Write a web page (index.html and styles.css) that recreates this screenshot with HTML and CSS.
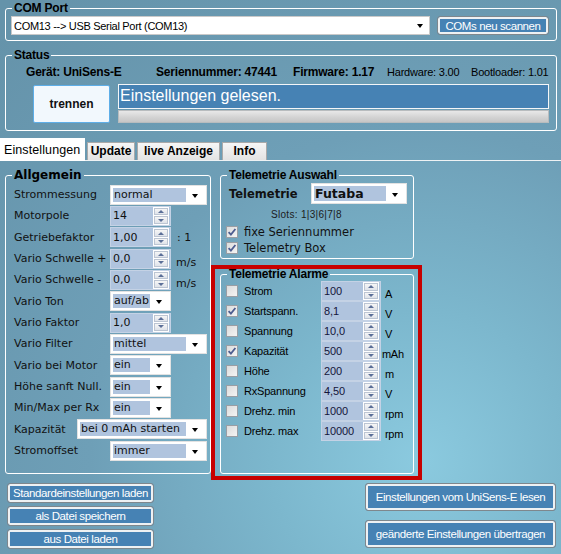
FILE: index.html
```html
<!DOCTYPE html>
<html lang="de">
<head>
<meta charset="utf-8">
<title>UniSens-E</title>
<link rel="stylesheet" href="styles.css">
</head>
<body>
<div class="app">
  <fieldset class="group com">
    <legend>COM Port</legend>
    <div class="com-body">
      <div class="combo plain com-select"><span class="val">COM13 --&gt; USB Serial Port (COM13)</span><span class="arr"></span></div>
      <div class="btn scan">COMs neu scannen</div>
    </div>
  </fieldset>

  <fieldset class="group status">
    <legend>Status</legend>
    <div class="status-body">
      <div class="info-row">
        <span class="i1 b">Gerät: UniSens-E</span>
        <span class="i2 b">Seriennummer: 47441</span>
        <span class="i3 b">Firmware: 1.17</span>
        <span class="i4">Hardware: 3.00</span>
        <span class="i5">Bootloader: 1.01</span>
      </div>
      <div class="status-row">
        <div class="disconnect">trennen</div>
        <div class="status-col">
          <div class="status-msg">Einstellungen gelesen.</div>
          <div class="progress"></div>
        </div>
      </div>
    </div>
  </fieldset>

  <div class="tabs">
    <div class="tab active">Einstellungen</div>
    <div class="tab t-update">Update</div>
    <div class="tab t-live">live Anzeige</div>
    <div class="tab t-info">Info</div>
  </div>

  <div class="panel">
    <div class="panel-top">
      <fieldset class="group allgemein">
        <legend>Allgemein</legend>
        <div class="al-body">
          <div class="arow"><span class="lbl">Strommessung</span><div class="combo w97"><span class="val">normal</span><span class="arr"></span></div></div>
          <div class="arow"><span class="lbl">Motorpole</span><div class="num"><span class="nv">14</span><span class="spin"><i class="up"></i><i class="dn"></i></span></div></div>
          <div class="arow"><span class="lbl">Getriebefaktor</span><div class="num"><span class="nv">1,00</span><span class="spin"><i class="up"></i><i class="dn"></i></span></div><span class="unit colon">: 1</span></div>
          <div class="arow"><span class="lbl">Vario Schwelle +</span><div class="num"><span class="nv">0,0</span><span class="spin"><i class="up"></i><i class="dn"></i></span></div><span class="unit low">m/s</span></div>
          <div class="arow"><span class="lbl">Vario Schwelle -</span><div class="num"><span class="nv">0,0</span><span class="spin"><i class="up"></i><i class="dn"></i></span></div><span class="unit low">m/s</span></div>
          <div class="arow"><span class="lbl">Vario Ton</span><div class="combo w61"><span class="val">auf/ab</span><span class="arr"></span></div></div>
          <div class="arow"><span class="lbl">Vario Faktor</span><div class="num"><span class="nv">1,0</span><span class="spin"><i class="up"></i><i class="dn"></i></span></div></div>
          <div class="arow"><span class="lbl">Vario Filter</span><div class="combo w97"><span class="val">mittel</span><span class="arr"></span></div></div>
          <div class="arow"><span class="lbl">Vario bei Motor</span><div class="combo w61"><span class="val">ein</span><span class="arr"></span></div></div>
          <div class="arow"><span class="lbl">Höhe sanft Null.</span><div class="combo w61"><span class="val">ein</span><span class="arr"></span></div></div>
          <div class="arow"><span class="lbl">Min/Max per Rx</span><div class="combo w61"><span class="val">ein</span><span class="arr"></span></div></div>
          <div class="arow"><span class="lbl short">Kapazität</span><div class="combo w130"><span class="val">bei 0 mAh starten</span><span class="arr"></span></div></div>
          <div class="arow"><span class="lbl">Stromoffset</span><div class="combo w97"><span class="val">immer</span><span class="arr"></span></div></div>
        </div>
      </fieldset>

      <div class="right-col">
        <fieldset class="group tele">
          <legend>Telemetrie Auswahl</legend>
          <div class="tele-body">
            <div class="tele-row"><span class="tlbl">Telemetrie</span><div class="combo w96 bold"><span class="val">Futaba</span><span class="arr"></span></div></div>
            <div class="slots">Slots: 1|3|6|7|8</div>
            <div class="cbrow"><span class="cb"><svg viewBox="0 0 12 12" width="12" height="12"><path d="M2.6 6.2 L4.9 8.6 L9.4 3" fill="none" stroke="#4d5d90" stroke-width="1.8"/></svg></span><span>fixe Seriennummer</span></div>
            <div class="cbrow"><span class="cb"><svg viewBox="0 0 12 12" width="12" height="12"><path d="M2.6 6.2 L4.9 8.6 L9.4 3" fill="none" stroke="#4d5d90" stroke-width="1.8"/></svg></span><span>Telemetry Box</span></div>
          </div>
        </fieldset>

        <div class="alarm-wrap">
          <fieldset class="group alarm">
            <legend>Telemetrie Alarme</legend>
            <div class="alarm-body">
              <div class="alrow"><span class="cb"></span><span class="allbl">Strom</span><div class="num sm"><span class="nv">100</span><span class="spin"><i class="up"></i><i class="dn"></i></span></div><span class="aunit">A</span></div>
              <div class="alrow"><span class="cb"><svg viewBox="0 0 12 12" width="12" height="12"><path d="M2.6 6.2 L4.9 8.6 L9.4 3" fill="none" stroke="#4d5d90" stroke-width="1.8"/></svg></span><span class="allbl">Startspann.</span><div class="num sm"><span class="nv">8,1</span><span class="spin"><i class="up"></i><i class="dn"></i></span></div><span class="aunit">V</span></div>
              <div class="alrow"><span class="cb"></span><span class="allbl">Spannung</span><div class="num sm"><span class="nv">10,0</span><span class="spin"><i class="up"></i><i class="dn"></i></span></div><span class="aunit">V</span></div>
              <div class="alrow"><span class="cb"><svg viewBox="0 0 12 12" width="12" height="12"><path d="M2.6 6.2 L4.9 8.6 L9.4 3" fill="none" stroke="#4d5d90" stroke-width="1.8"/></svg></span><span class="allbl">Kapazität</span><div class="num sm"><span class="nv">500</span><span class="spin"><i class="up"></i><i class="dn"></i></span></div><span class="aunit mah">mAh</span></div>
              <div class="alrow"><span class="cb"></span><span class="allbl">Höhe</span><div class="num sm"><span class="nv">200</span><span class="spin"><i class="up"></i><i class="dn"></i></span></div><span class="aunit">m</span></div>
              <div class="alrow"><span class="cb"></span><span class="allbl">RxSpannung</span><div class="num sm"><span class="nv">4,50</span><span class="spin"><i class="up"></i><i class="dn"></i></span></div><span class="aunit">V</span></div>
              <div class="alrow"><span class="cb"></span><span class="allbl">Drehz. min</span><div class="num sm"><span class="nv">1000</span><span class="spin"><i class="up"></i><i class="dn"></i></span></div><span class="aunit">rpm</span></div>
              <div class="alrow"><span class="cb"></span><span class="allbl">Drehz. max</span><div class="num sm"><span class="nv">10000</span><span class="spin"><i class="up"></i><i class="dn"></i></span></div><span class="aunit">rpm</span></div>
            </div>
          </fieldset>
        </div>
      </div>
    </div>

    <div class="bottom-row">
      <div class="left-btns">
        <div class="btn sbtn">Standardeinstellungen laden</div>
        <div class="btn sbtn">als Datei speichern</div>
        <div class="btn sbtn">aus Datei laden</div>
      </div>
      <div class="right-btns">
        <div class="btn lbtn">Einstellungen vom UniSens-E lesen</div>
        <div class="btn lbtn">geänderte Einstellungen übertragen</div>
      </div>
    </div>
  </div>
</div>
</body>
</html>
```

FILE: styles.css
```css
* { box-sizing: border-box; }
html, body { margin: 0; padding: 0; }
body {
  width: 561px;
  height: 554px;
  overflow: hidden;
  font-family: "Liberation Sans", Arial, sans-serif;
  font-size: 11px;
  color: #000;
  background: radial-gradient(circle at 420px 460px, #8bcadf 0px, #7cb7cd 150px, #6e9fb7 330px, #6593aa 600px);
}
.app { width: 561px; height: 554px; }

/* group boxes */
.group {
  border: 1px solid #fff;
  border-radius: 3px;
  margin: 0;
  padding: 0;
  min-width: 0;
}
.group > legend {
  margin-left: 6px;
  padding: 0 2px;
  font: bold 12px/14px "Liberation Sans", Arial, sans-serif;
  letter-spacing: -0.2px;
  color: #000;
}

/* COM port */
.com { width: 552px; margin: 1px 0 0 5px; }
.com-body { display: flex; align-items: center; gap: 7px; padding: 1px 7px 5px 5px; }

.combo {
  display: flex;
  align-items: center;
  height: 20px;
  background: #fff;
  border: 1px solid #e2e2e2;
  padding: 2px;
  font-family: "DejaVu Sans", Verdana, sans-serif;
  font-size: 11px;
}
.combo .val {
  flex: 1;
  height: 14px;
  line-height: 14px;
  background: #b0c4de;
  padding-left: 1px;
  white-space: nowrap;
  overflow: hidden;
}
.combo .arr {
  flex: none;
  width: 18px;
  height: 14px;
  position: relative;
}
.combo .arr::after {
  content: "";
  position: absolute;
  left: 6px;
  top: 6px;
  border-left: 3.5px solid transparent;
  border-right: 3.5px solid transparent;
  border-top: 4px solid #000;
}
.combo.plain { border-color: #c9c9c9; height: 19px; }
.combo.plain .val {
  background: transparent;
  font-family: "Liberation Sans", Arial, sans-serif;
  letter-spacing: -0.3px;
  padding-left: 0;
}
.com-select { flex: 0 0 419px; }
.com-select .arr { width: 14px; }
.com-select .arr::after { left: 4px; top: 5px; border-left-width: 3px; border-right-width: 3px; border-top-width: 4px; }

.btn {
  display: flex;
  align-items: center;
  justify-content: center;
  background: #4682b4;
  color: #fff;
  border: 1px solid #7e878d;
  border-radius: 3px;
  box-shadow: inset 0 0 0 2px #eef1f3;
  font-family: "Liberation Sans", Arial, sans-serif;
  font-size: 11.5px;
  letter-spacing: -0.4px;
  white-space: nowrap;
}
.scan { flex: 0 0 112px; height: 19px; }

/* status */
.status { width: 552px; margin: 7px 0 0 5px; }
.status-body { padding: 3px 6px 7px 0; }
.info-row {
  display: flex;
  height: 14px;
  line-height: 14px;
  padding-left: 20px;
  letter-spacing: -0.2px;
  white-space: nowrap;
}
.info-row .b { font-weight: bold; font-size: 12px; }
.i1 { width: 130px; }
.i2 { width: 137px; }
.i3 { width: 94px; }
.i4 { width: 84px; }
.status-row { display: flex; margin-top: 5px; padding-left: 27px; }
.disconnect {
  width: 77px;
  height: 38px;
  margin-top: 1px;
  background: #f2f8fd;
  border: 1px solid #5eaee8;
  border-radius: 2px;
  display: flex;
  align-items: center;
  justify-content: center;
  font-weight: bold;
  font-size: 12px;
  color: #111;
}
.status-col { width: 431px; margin-left: 8px; }
.status-msg {
  height: 25px;
  background: #4682b4;
  border: 1px solid #f4f6f8;
  color: #fff;
  font-size: 16px;
  line-height: 22px;
  padding-left: 1px;
}
.progress {
  height: 13px;
  margin-top: 1px;
  border: 1px solid #b8bcbe;
  background: linear-gradient(#e8e8e8, #d2d2d2 60%, #c6c6c6);
}

/* tabs */
.tabs {
  display: flex;
  align-items: flex-end;
  height: 22px;
  margin-top: 7px;
}
.tab {
  height: 18px;
  background: linear-gradient(#f6f6f6, #e3e3e3);
  border: 1px solid #a9a9a9;
  border-bottom: none;
  font-weight: bold;
  font-size: 12px;
  line-height: 17px;
  text-align: center;
  margin-right: 2px;
}
.tab.active {
  position: relative;
  z-index: 1;
  width: 85px;
  height: 23px;
  margin-bottom: -1px;
  margin-right: 2px;
  background: #fff;
  border: none;
  font-weight: normal;
  font-size: 12.5px;
  line-height: 24px;
  text-align: left;
  padding-left: 4px;
  letter-spacing: 0.1px;
}
.t-update { width: 48px; }
.t-live { width: 83px; }
.t-info { width: 45px; }

/* panel */
.panel { border-top: 1px solid #eef2f4; }
.panel-top { display: flex; align-items: flex-start; padding-left: 5px; margin-top: 7px; }

.allgemein { width: 206px; }
.allgemein > legend { font-family: "DejaVu Sans", Verdana, sans-serif; letter-spacing: 0; }
.al-body {
  padding: 2px 0 12px 8px;
  font-family: "DejaVu Sans", Verdana, sans-serif;
  font-size: 11px;
  color: #111;
}
.arow { display: flex; align-items: center; height: 21.33px; }
.lbl { flex: none; width: 96px; white-space: nowrap; }
.lbl.short { width: 63px; }
.w97 { width: 97px; }
.w96 { width: 96px; }
.w61 { width: 61px; }
.w130 { width: 130px; }

.num {
  display: flex;
  align-items: center;
  width: 61px;
  height: 20px;
  background: #b0c4de;
  border: 1px solid #c4d2e5;
  padding-left: 2px;
}
.num .nv { flex: 1; white-space: nowrap; }
.spin {
  flex: none;
  display: flex;
  flex-direction: column;
  gap: 1px;
  width: 16px;
  height: 18px;
  margin-right: 1px;
  padding: 1px;
  background: #fff;
}
.spin i {
  flex: 1;
  display: flex;
  align-items: center;
  justify-content: center;
  background: linear-gradient(#f6f6f6, #dfe3ea);
  border: 1px solid #bcc5d3;
}
.spin i::after {
  content: "";
  border-left: 3px solid transparent;
  border-right: 3px solid transparent;
}
.spin .up::after { border-bottom: 3px solid #5b6f98; }
.spin .dn::after { border-top: 3px solid #5b6f98; }

.unit { white-space: nowrap; }
.unit.colon { margin-left: 6px; }
.unit.low { margin-left: 5px; margin-top: 7px; }

/* right column */
.right-col { width: 211px; flex: none; }
.tele { width: 194px; margin-left: 9px; }
.tele-body { padding: 1px 5px 2px 5px; font-family: "DejaVu Sans", Verdana, sans-serif; font-size: 11.5px; color: #111; }
.tele-row { display: flex; align-items: center; height: 21px; }
.tlbl { width: 85px; padding-left: 3px; font-weight: bold; font-size: 11.5px; }
.combo.bold { height: 21px; }
.combo.bold .val { font-weight: bold; font-size: 12.5px; height: 15px; line-height: 15px; }
.slots {
  margin-top: 5px;
  height: 12px;
  line-height: 12px;
  padding-left: 45px;
  font-family: "Liberation Sans", Arial, sans-serif;
  font-size: 10px;
  letter-spacing: 0.3px;
  color: #1c1c1c;
}
.cbrow { display: flex; align-items: center; height: 16px; gap: 6px; }
.cbrow:first-of-type { margin-top: 3px; }
.slots + .cbrow { margin-top: 3px; }

.cb {
  flex: none;
  width: 12px;
  height: 12px;
  border: 1px solid #9a9ea4;
  background: linear-gradient(135deg, #dcdcdc, #f4f4f4);
  display: block;
  position: relative;
}
.cb svg { position: absolute; left: -1px; top: -1px; }

.alarm-wrap {
  width: 211px;
  margin-top: 6px;
  border: 4px solid #c70000;
  padding: 0 3px 2px 5px;
}
.alarm { width: 194px; }
.alarm > legend { line-height: 10px; }
.alarm-body { padding: 2px 0 32px 5px; }
.alrow { display: flex; align-items: center; height: 20px; }
.allbl { width: 77px; margin-left: 6px; white-space: nowrap; letter-spacing: -0.2px; }
.num.sm { width: 60px; padding-left: 2px; letter-spacing: -0.1px; }
.num.sm .nv { color: #14143a; }
.aunit { margin-left: 4px; margin-top: 5px; letter-spacing: -0.3px; }
.aunit.mah { margin-left: 1px; }

/* bottom buttons */
.bottom-row {
  display: flex;
  justify-content: space-between;
  align-items: flex-start;
  margin-top: 3px;
  padding: 0 5px 0 7px;
}
.left-btns { display: flex; flex-direction: column; gap: 3px; }
.sbtn { width: 147px; height: 20px; }
.right-btns { display: flex; flex-direction: column; gap: 9px; }
.lbtn { width: 191px; height: 28px; }
```
